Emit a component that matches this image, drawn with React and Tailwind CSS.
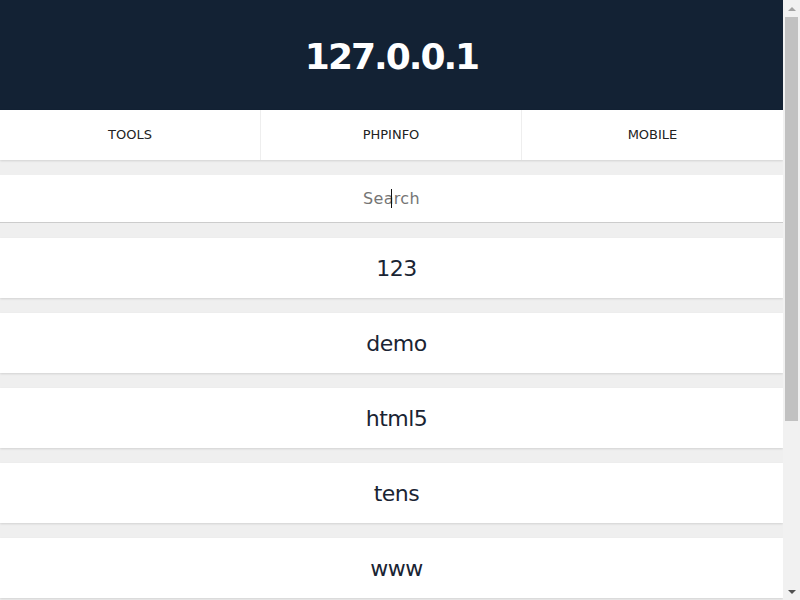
import React from 'react';

const sites = ['123', 'demo', 'html5', 'tens', 'www'];

function Scrollbar() {
  return (
    <div className="w-[17px] shrink-0 h-screen bg-[#f1f1f1] flex flex-col">
      <div className="h-[17px] flex items-center justify-center">
        <div className="w-0 h-0 border-x-[4px] border-x-transparent border-b-[4px] border-b-[#a3a3a3]" />
      </div>
      <div className="flex-1 px-[2px]">
        <div className="h-[404px] bg-[#c1c1c1]" />
      </div>
      <div className="h-[17px] flex items-center justify-center">
        <div className="w-0 h-0 border-x-[4px] border-x-transparent border-t-[4px] border-t-[#505050]" />
      </div>
    </div>
  );
}

export default function App() {
  return (
    <div className="h-screen overflow-hidden flex bg-[#efefef] font-['DejaVu_Sans',sans-serif] text-[#1a1a1a]">
      <div className="flex-1 min-w-0">
        <header className="h-[110px] bg-[#132234] flex items-center justify-center">
          <h1 className="text-white text-[36px] font-bold tracking-[-2px] mt-[3px]">127.0.0.1</h1>
        </header>
        <nav className="grid grid-cols-3 h-[50px] bg-white shadow-[0_1px_2px_rgba(0,0,0,0.12)]">
          <a className="flex items-center justify-center text-[13px] text-[#222] border-r border-[#eee]">TOOLS</a>
          <a className="flex items-center justify-center text-[13px] text-[#222] border-r border-[#eee]">PHPINFO</a>
          <a className="flex items-center justify-center text-[13px] text-[#222]">MOBILE</a>
        </nav>
        <div className="mt-[15px] bg-white border-b border-[#ccc] relative">
          <input
            placeholder="Search"
            className="w-full h-[47px] text-center text-[16px] tracking-[0.3px] outline-none placeholder:text-[#757575]"
          />
          <span className="absolute left-[391px] top-[14px] w-px h-[19px] bg-[#111]" />
        </div>
        <ul className="flex flex-col gap-[15px] py-[15px]">
          {sites.map(s => (
            <li key={s} className="h-[60px] pl-[10px] bg-white shadow-[0_1px_2px_rgba(0,0,0,0.12)] flex items-center justify-center text-[22px] tracking-[-0.5px] text-[#1a2433]">
              {s}
            </li>
          ))}
        </ul>
      </div>
      <Scrollbar />
    </div>
  );
}
